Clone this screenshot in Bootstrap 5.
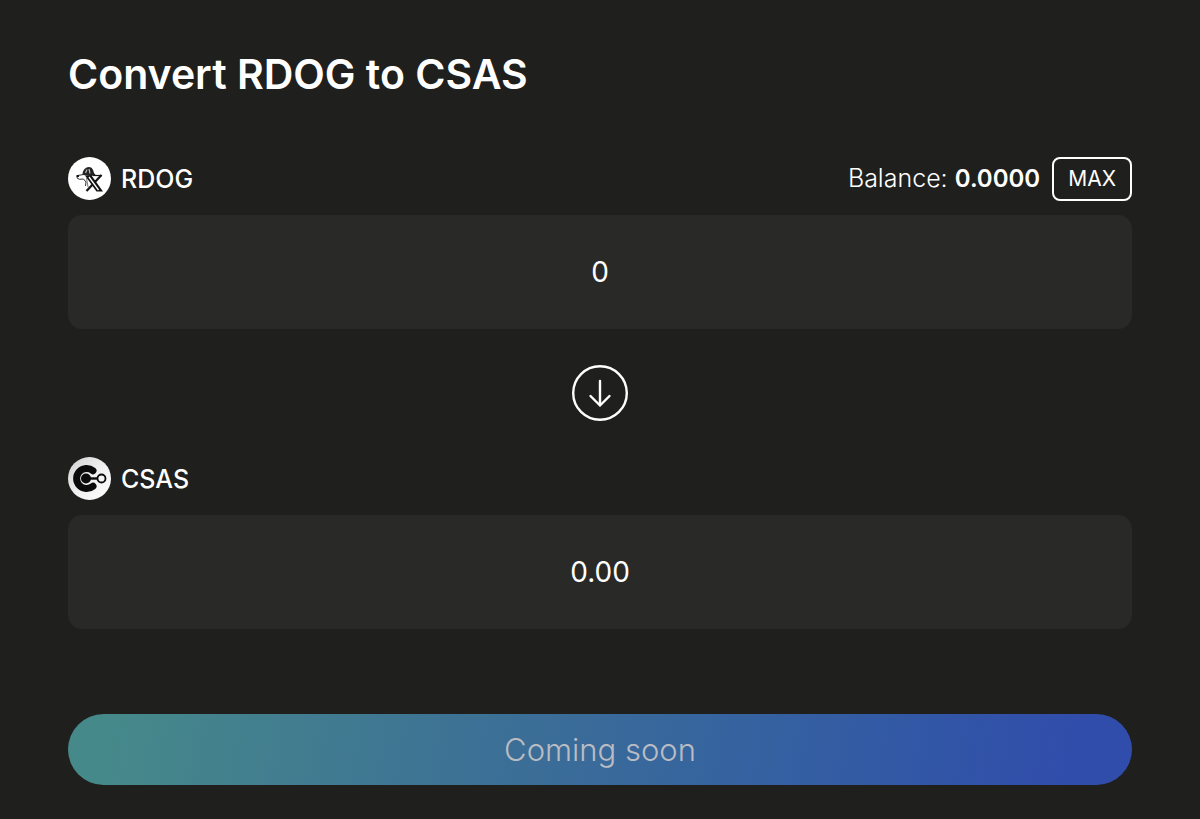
<!DOCTYPE html>
<html lang="en">
<head>
<meta charset="utf-8">
<meta name="viewport" content="width=device-width, initial-scale=1">
<title>Convert RDOG to CSAS</title>
<link href="https://cdn.jsdelivr.net/npm/bootstrap@5.3.0/dist/css/bootstrap.min.css" rel="stylesheet">
<style>
  body { background: #1f1f1d; color: #fff; font-family: Inter, sans-serif; font-size: 25px; line-height: 36px; }
  .swap { padding: 48px 68px 34px; }
  .swap-title { font-size: 41px; line-height: 52px; font-weight: 600; margin-bottom: 56px; }
  .token-row { min-height: 45px; margin-bottom: 14px; }
  .token-icon { width: 43px; height: 43px; }
  .token-name { font-weight: 500; margin-left: 10px; }
  .balance { font-weight: 300; margin-right: 12px; }
  .balance strong { font-size: 24px; font-weight: 600; }
  .btn-max { color: #fff; border: 2px solid #fff; border-radius: 8px; font-size: 21px; line-height: 32px; padding: 4px 14px; }
  .btn-max:hover { color: #1f1f1d; background: #fff; }
  .amount, .amount:focus { background: #292928; color: #fff; border: 0; border-radius: 14px; box-shadow: none; text-align: center; font-size: 28px; line-height: 42px; padding: 36px 24px; }
  .switch { margin: 36px 0 35px; }
  .switch svg { width: 56px; height: 56px; display: block; }
  .btn-soon, .btn-soon:disabled { background: linear-gradient(100deg, #46898a 4%, #3d7195 38%, #3562a0 64%, #304dab 94%); color: #b9bdc3; border: 0; opacity: 1; font-size: 31px; line-height: 43px; font-weight: 300; padding: 14px 24px; margin-top: 85px; }
</style>
</head>
<body>
<main class="swap container-fluid">
  <h1 class="swap-title">Convert RDOG to CSAS</h1>
  <div class="token-row d-flex align-items-center">
    <svg class="token-icon flex-shrink-0" viewBox="0 0 43 43" aria-hidden="true">
      <circle cx="21.500" cy="21.500" r="21.500" fill="#fff"/>
      <path d="M14.500 17C15 13 17.500 10 21 10C24 10 25.500 13 26 16L28 18.500L22 19L15 18Z" fill="#222"/>
      <path d="M17.500 16L19 12.500M22 16.500L21 12" stroke="#bbb" stroke-width="1.200" fill="none"/>
      <path d="M15.500 17.500L9.500 18.500L9 21L11.500 22.300L15.500 22L18 25L17.500 29" fill="none" stroke="#333" stroke-width="1"/>
      <path d="M8.500 18H11V20H8.500Z" fill="#151515"/>
      <path d="M18.500 21L20 30" stroke="#888" stroke-width="1.200"/>
      <path d="M33.500 18L18.500 34" stroke="#151515" stroke-width="2.200"/>
      <path d="M17 18.500H23.500L35 34.500H28.500Z" fill="#111"/>
      <path d="M21 20L30.500 33" stroke="#fff" stroke-width="1.300"/>
      <path d="M25 18.500H34" stroke="#151515" stroke-width="1.200"/>
    </svg>
    <label class="token-name" for="from">RDOG</label>
    <span class="balance ms-auto">Balance: <strong>0.0000</strong></span>
    <button class="btn btn-max" type="button">MAX</button>
  </div>
  <input class="amount form-control" id="from" type="text" inputmode="decimal" value="0">
  <div class="switch d-flex justify-content-center">
    <button class="btn p-0 border-0 rounded-circle" type="button" aria-label="Switch tokens">
      <svg viewBox="0 0 56 56" fill="none" stroke="#fff" stroke-width="2.400" stroke-linecap="round" stroke-linejoin="round">
        <circle cx="28" cy="28" r="26.800"/>
        <path d="M28 16V40.500M18.500 31L28 40.500L37.500 31"/>
      </svg>
    </button>
  </div>
  <div class="token-row d-flex align-items-center">
    <svg class="token-icon flex-shrink-0" viewBox="0 0 43 43" aria-hidden="true">
      <defs><linearGradient id="silver" x1="0" y1="0" x2="1" y2="1"><stop stop-color="#d0d0d0"/><stop offset=".5" stop-color="#f0f0f0"/><stop offset="1" stop-color="#fff"/></linearGradient></defs>
      <circle cx="21.500" cy="21.500" r="21.500" fill="url(#silver)"/>
      <path d="M25 13.800A10 10 0 1 0 25 29.200" fill="none" stroke="#0b0b0b" stroke-width="7" stroke-linecap="round"/>
      <circle cx="18" cy="21.500" r="5" fill="#0b0b0b"/>
      <path d="M20 21.500H30" stroke="#0b0b0b" stroke-width="2.400"/>
      <circle cx="33.500" cy="21.500" r="4" fill="#f5f5f5" stroke="#0b0b0b" stroke-width="1.800"/>
    </svg>
    <label class="token-name" for="to">CSAS</label>
  </div>
  <input class="amount form-control" id="to" type="text" value="0.00" readonly>
  <button class="btn btn-soon w-100 rounded-pill" type="button" disabled>Coming soon</button>
</main>
<script src="https://cdn.jsdelivr.net/npm/bootstrap@5.3.0/dist/js/bootstrap.bundle.min.js"></script>
</body>
</html>
